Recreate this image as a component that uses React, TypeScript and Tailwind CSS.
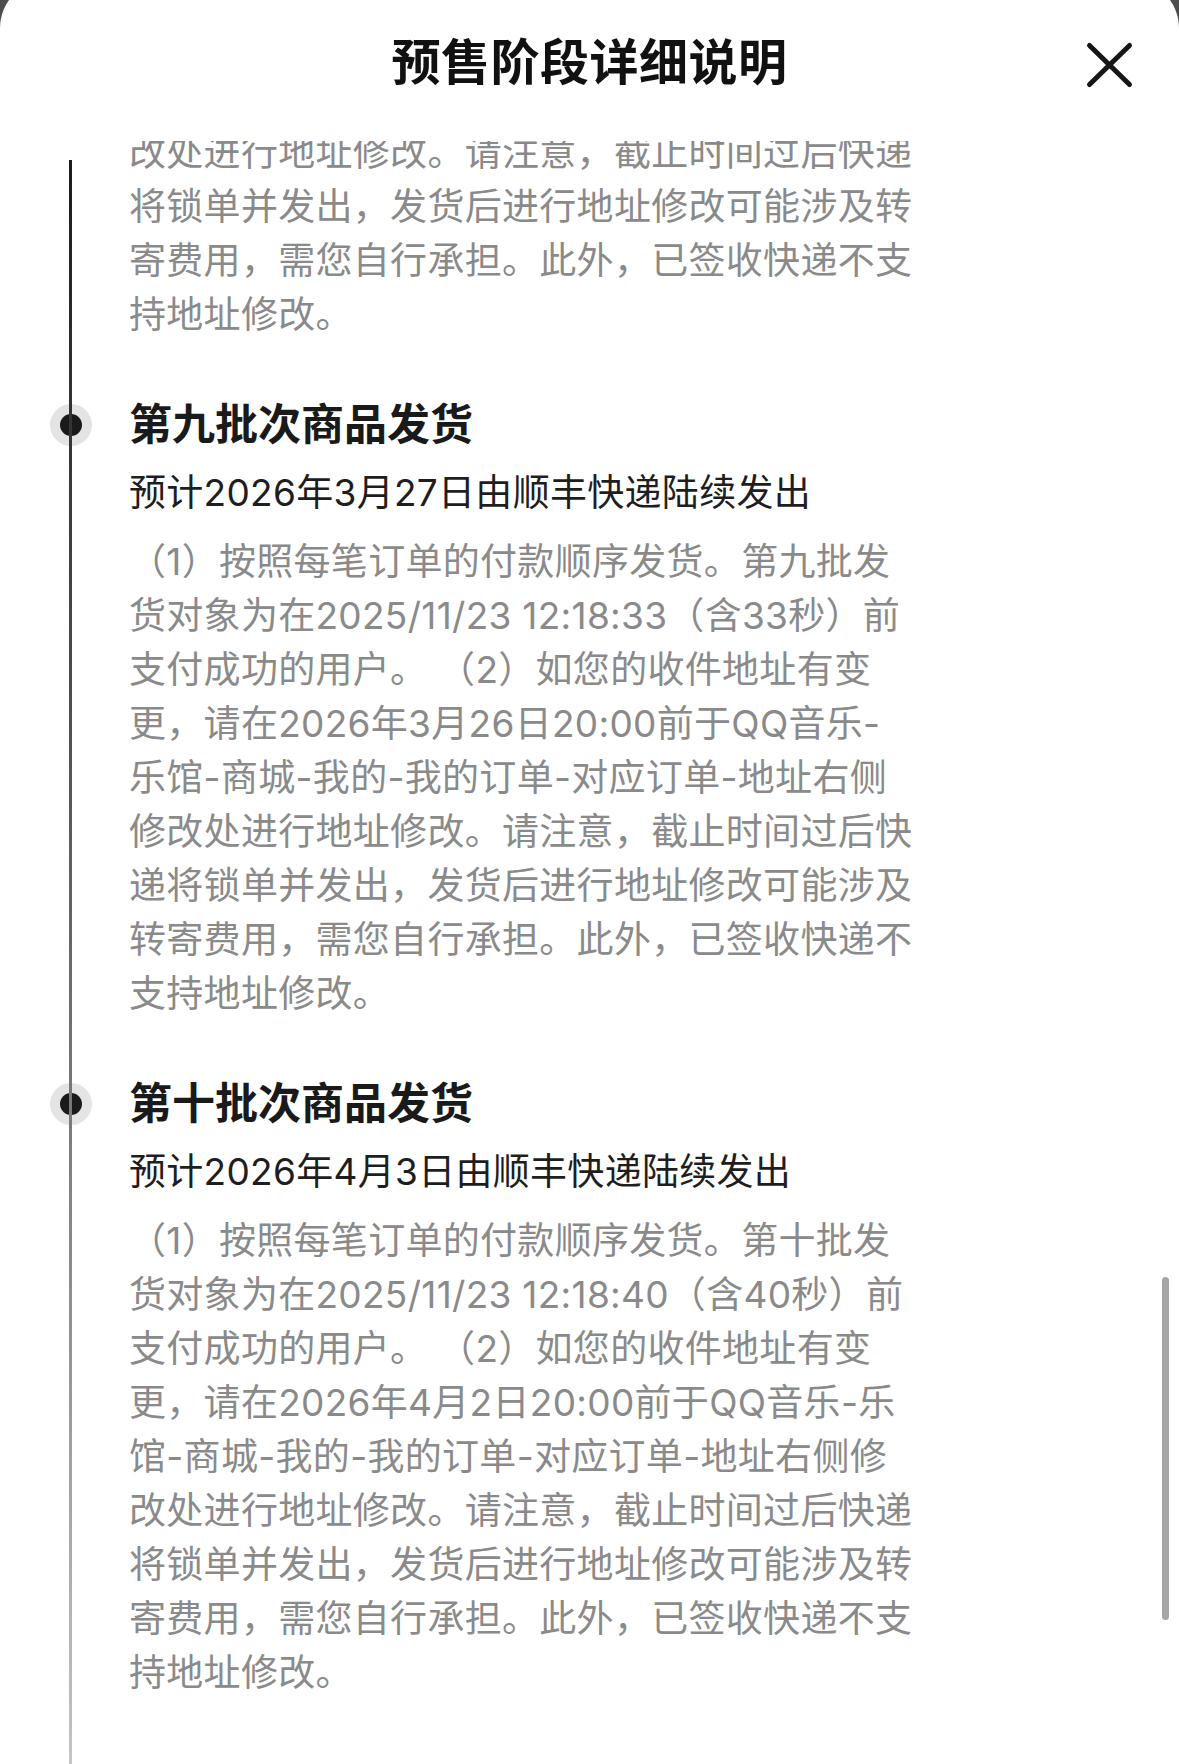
type Batch = {
  title: string;
  eta: string;
  lines: string[];
};

// tail of the previous batch, already scrolled partly under the header
const prevTail = [
  "改处进行地址修改。请注意，截止时间过后快递",
  "将锁单并发出，发货后进行地址修改可能涉及转",
  "寄费用，需您自行承担。此外，已签收快递不支",
  "持地址修改。",
];

const batches: Batch[] = [
  {
    title: "第九批次商品发货",
    eta: "预计2026年3月27日由顺丰快递陆续发出",
    lines: [
      "（1）按照每笔订单的付款顺序发货。第九批发",
      "货对象为在2025/11/23 12:18:33（含33秒）前",
      "支付成功的用户。 （2）如您的收件地址有变",
      "更，请在2026年3月26日20:00前于QQ音乐-",
      "乐馆-商城-我的-我的订单-对应订单-地址右侧",
      "修改处进行地址修改。请注意，截止时间过后快",
      "递将锁单并发出，发货后进行地址修改可能涉及",
      "转寄费用，需您自行承担。此外，已签收快递不",
      "支持地址修改。",
    ],
  },
  {
    title: "第十批次商品发货",
    eta: "预计2026年4月3日由顺丰快递陆续发出",
    lines: [
      "（1）按照每笔订单的付款顺序发货。第十批发",
      "货对象为在2025/11/23 12:18:40（含40秒）前",
      "支付成功的用户。 （2）如您的收件地址有变",
      "更，请在2026年4月2日20:00前于QQ音乐-乐",
      "馆-商城-我的-我的订单-对应订单-地址右侧修",
      "改处进行地址修改。请注意，截止时间过后快递",
      "将锁单并发出，发货后进行地址修改可能涉及转",
      "寄费用，需您自行承担。此外，已签收快递不支",
      "持地址修改。",
    ],
  },
];

const Lines = ({ lines }: { lines: string[] }) => (
  <div className="text-[37px] leading-[54px] tracking-[0.3px] text-[#8a8a8a]">
    {lines.map((l, i) => (
      <p key={i} className="whitespace-pre">
        {l}
      </p>
    ))}
  </div>
);

const BatchItem = ({ batch }: { batch: Batch }) => (
  <div className="mt-[52px]">
    <h3 className="relative text-[43px] leading-[60px] font-bold text-[#1a1a1a]">
      <span className="absolute left-[-79px] top-[10px] flex h-[42px] w-[42px] items-center justify-center rounded-full bg-[#e4e4e4]">
        <span className="h-[22px] w-[22px] rounded-full bg-[#1a1a1a]" />
      </span>
      {batch.title}
    </h3>
    <p className="mt-[12px] text-[37px] leading-[54px] tracking-[0.3px] text-[#1e1e1e]">
      {batch.eta}
    </p>
    <div className="mt-[15px]">
      <Lines lines={batch.lines} />
    </div>
  </div>
);

export default function App() {
  return (
    <div
      className="h-[1764px] w-[1179px] overflow-hidden bg-[#4e4e4e]"
      style={{ fontFamily: 'Inter, "Noto Sans CJK SC", "Noto Sans", sans-serif' }}
    >
      <div className="relative -mt-[20px] flex h-[1784px] flex-col rounded-t-[48px] bg-white">
        <header className="relative flex h-[161px] shrink-0 justify-center pt-[58px]">
          <h1 className="text-[49px] leading-[49px] font-bold tracking-[0.5px] text-[#111]">
            预售阶段详细说明
          </h1>
          <button className="absolute right-[39px] top-[55px]" aria-label="关闭">
            <svg width="60" height="60" viewBox="0 0 60 60" fill="none">
              <path
                d="M9.5 10.5L49.5 49.5M49.5 10.5L9.5 49.5"
                stroke="#161616"
                strokeWidth="5"
                strokeLinecap="round"
              />
            </svg>
          </button>
        </header>

        <div className="relative flex-1 overflow-hidden">
          <div className="-mt-[15px] pl-[129px]">
            <Lines lines={prevTail} />
            {batches.map((b) => (
              <BatchItem key={b.title} batch={b} />
            ))}
          </div>
          {/* timeline rail */}
          <div className="absolute bottom-0 left-[69px] top-[19px] w-[3px] bg-linear-to-b from-[#1c1c1c] to-[#c4c4c4]" />
          {/* scroll indicator */}
          <div className="absolute right-[10px] top-[1136px] h-[343px] w-[7px] rounded-full bg-[#a6a6a6]" />
        </div>
      </div>
    </div>
  );
}
